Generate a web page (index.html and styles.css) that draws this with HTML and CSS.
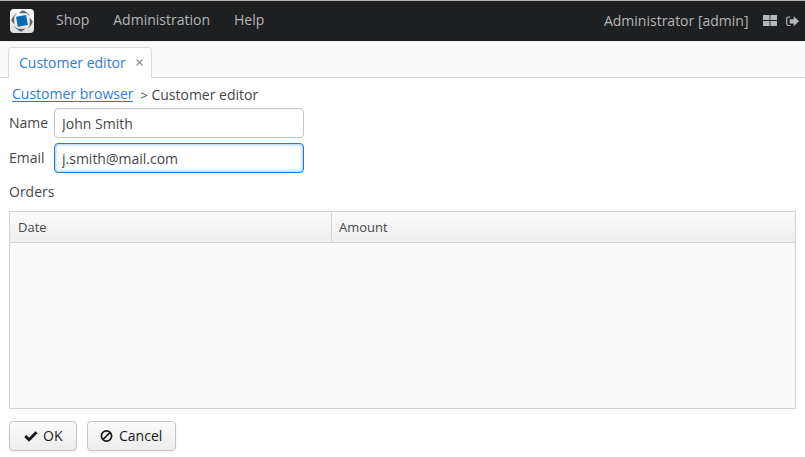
FILE: index.html
```
<!DOCTYPE html>
<html lang="en">
<head>
<meta charset="utf-8">
<title>Customer editor</title>
<link rel="stylesheet" href="styles.css">
</head>
<body>
<header class="topbar">
  <svg class="logo" width="24" height="24" viewBox="0 0 24 24">
    <defs><linearGradient id="g" x1="0" y1="0" x2="0" y2="1"><stop offset="0" stop-color="#fff"/><stop offset="1" stop-color="#dedede"/></linearGradient></defs>
    <rect width="24" height="24" rx="4" fill="url(#g)"/>
    <g fill="#666">
      <path d="M8.500 4.300 12.500 1.200Q17.500 2.500 20 7.200L16.500 4.300z"/>
      <path d="M8.500 4.300 12.500 1.200Q17.500 2.500 20 7.200L16.500 4.300z" transform="rotate(90 12 12)"/>
      <path d="M8.500 4.300 12.500 1.200Q17.500 2.500 20 7.200L16.500 4.300z" transform="rotate(180 12 12)"/>
      <path d="M8.500 4.300 12.500 1.200Q17.500 2.500 20 7.200L16.500 4.300z" transform="rotate(270 12 12)"/>
    </g>
    <rect x="6.900" y="6.700" width="10.200" height="10.200" fill="#0868b0" transform="rotate(-10 12 12)"/>
  </svg>
  <nav class="menu"><span>Shop</span><span>Administration</span><span>Help</span></nav>
  <span class="user">Administrator [admin]</span>
  <svg class="windows" width="14" height="11" viewBox="0 0 14 11"><path fill="#b5b6b7" d="M0 0h6.600v5H0zM7.400 0H14v5H7.400zM0 6h6.600v5H0zM7.400 6H14v5H7.400z"/></svg>
  <svg class="logout" width="13" height="11" viewBox="0 0 13 11"><path fill="none" stroke="#b5b6b7" stroke-width="1.200" d="M4.500 1H2.400Q.7 1 .7 2.700v5.100q0 1.700 1.700 1.700H4.500"/><path fill="#b5b6b7" d="M3.700 3.200h4V.3l5.300 5-5.300 5V7.400h-4z"/></svg>
</header>
<div class="tabs">
  <div class="tab">Customer editor<svg class="close" width="7" height="7" viewBox="0 0 7 7"><path d="M.5.5l6 6m0-6l-6 6" stroke="#8f8f8f" stroke-width="1.100"/></svg></div>
</div>
<main>
  <div class="crumbs"><a>Customer browser</a><span class="sep">&gt;</span><span class="here">Customer editor</span></div>
  <div class="field"><label for="name">Name</label><input id="name" value="John Smith"></div>
  <div class="field"><label for="email">Email</label><input id="email" class="focused" value="j.smith@mail.com"></div>
  <div class="caption">Orders</div>
  <div class="table">
    <div class="thead"><div class="th date">Date</div><div class="th">Amount</div></div>
  </div>
  <div class="actions">
    <button class="ok"><svg width="14" height="12" viewBox="0 0 14 12"><path d="M1.300 6l3.700 3.700 7.500-7.500" fill="none" stroke="#191919" stroke-width="3"/></svg>OK</button>
    <button class="cancel"><svg width="13" height="12" viewBox="0 0 13 12"><g fill="none" stroke="#191919" stroke-width="1.700"><circle cx="6.500" cy="6" r="5.100"/><path d="M3 9.500l7-7"/></g></svg>Cancel</button>
  </div>
</main>
</body>
</html>
```
FILE: styles.css
```
* { box-sizing: border-box; }
body {
  margin: 0;
  height: 457px;
  overflow: hidden;
  background: #fff;
  color: #474747;
  font: 14px/20px "Open Sans", sans-serif;
}
.topbar {
  display: flex;
  height: 41px;
  padding: 0 6px 0 10px;
  border-top: 1px solid #b3b3b3;
  background: #1d1f21;
  color: #b5b6b7;
}
.logo { margin-top: 8px; }
.menu { display: flex; gap: 24px; margin: 9px 0 0 22px; }
.user { margin: 10px 0 0 auto; }
.windows { margin: 14px 0 0 14.500px; }
.logout { margin: 15px 0 0 9px; }
.tabs {
  display: flex;
  height: 37px;
  padding: 6px 0 0 8px;
  background: #fafafa;
  box-shadow: inset 0 -1px #dcdcdc, inset 0 1px #ececec;
}
.tab {
  width: 144px;
  padding: 5px 0 0 10px;
  border: 1px solid #dcdcdc;
  border-bottom: 0;
  border-radius: 4px 4px 0 0;
  background: #fff;
  color: #2f7ce0;
  white-space: nowrap;
}
.close { margin-left: 10px; vertical-align: 2px; }
main { padding: 6px 9px 0; }
.crumbs { display: flex; height: 24px; padding-left: 3px; }
.crumbs a { height: 18px; border-bottom: 1px solid #197de1; color: #2f7ce0; }
.sep { margin: 1px 3.500px 0 7px; font-size: 13px; }
.here { margin-top: 1px; }
.field { display: flex; height: 30px; margin-bottom: 5px; }
.field label { width: 45px; padding-top: 5px; }
.field input {
  width: 250px;
  height: 30px;
  padding: 0 7px;
  border: 1px solid #c5c5c5;
  border-radius: 4px;
  outline: 0;
  background: #fff;
  box-shadow: inset 0 1px 0 #f7f7f7;
  color: #474747;
  font: inherit;
}
.field input.focused { border-color: #197de1; box-shadow: inset 0 0 3px 1px #a9cdf3; }
.caption { height: 33px; padding-top: 4px; }
.table { width: 787px; height: 198px; border: 1px solid #d3d3d3; background: #fafafa; }
.thead {
  display: flex;
  height: 31px;
  border-bottom: 1px solid #d3d3d3;
  background: linear-gradient(#fafafa, #efefef);
  font-size: 13px;
}
.th { padding: 5px 7px 0; }
.th.date { width: 322px; padding-left: 8px; border-right: 1px solid #d3d3d3; }
.actions { display: flex; gap: 10px; margin-top: 12px; }
button {
  display: flex;
  align-items: center;
  height: 30px;
  padding: 0 0 0 14px;
  border: 1px solid #c5c5c5;
  border-radius: 4px;
  background: linear-gradient(#fafafa, #ededed);
  box-shadow: inset 0 1px #fff, 0 2px 3px rgba(0, 0, 0, .05);
  color: #191919;
  font: inherit;
}
.ok { width: 68px; }
.ok svg { margin-right: 5px; }
.cancel { width: 89px; padding-left: 12px; }
.cancel svg { margin-right: 6px; }
```
